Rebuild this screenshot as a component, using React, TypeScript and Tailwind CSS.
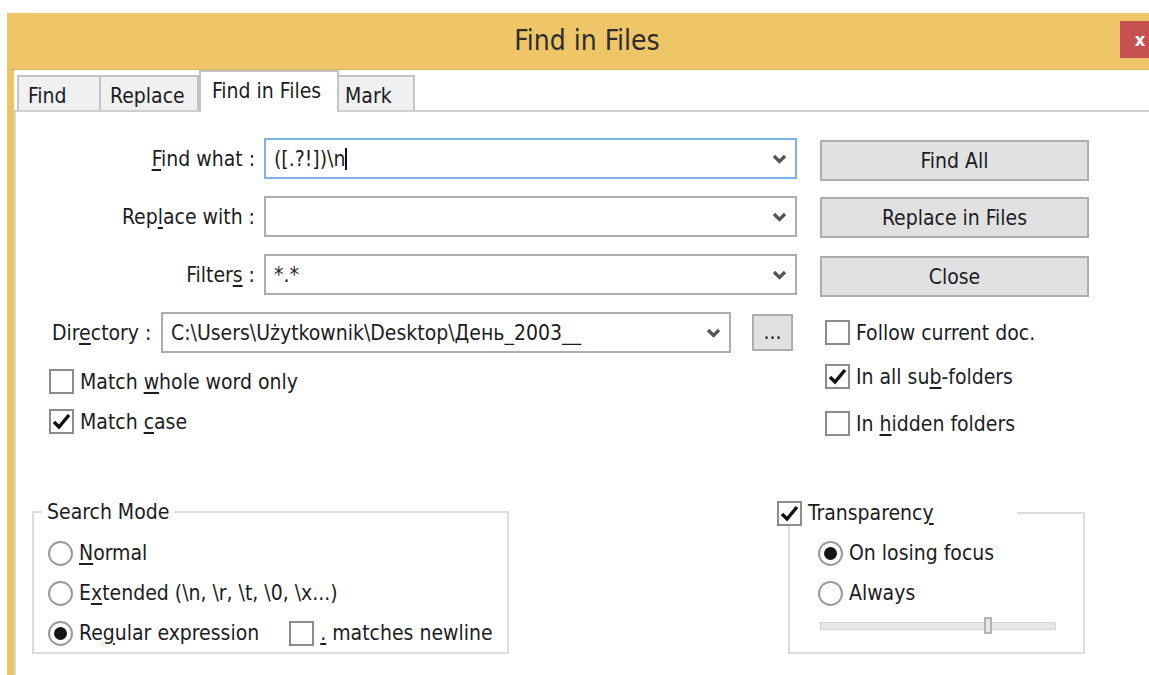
import React from "react";

const font = { fontFamily: '"DejaVu Sans Condensed", "Liberation Sans", sans-serif' };

// mnemonic letter, drawn underlined like a Win32 accelerator
const U = ({ children }: { children: React.ReactNode }) => (
    <span className="underline decoration-2 underline-offset-[3px]">{children}</span>
);

const Chevron = () => (
    <svg width="15" height="10" viewBox="0 0 15 10" className="shrink-0">
        <polyline points="2,2 7.5,7.5 13,2" fill="none" stroke="#555" strokeWidth="3.2" />
    </svg>
);

const Check = ({ checked }: { checked?: boolean }) => (
    <div className="w-[25px] h-[25px] shrink-0 border-2 border-[#8c8c8c] bg-white flex items-center justify-center">
        {checked && (
            <svg width="19" height="17" viewBox="0 0 19 17">
                <path d="M2 9 L7 14 L17 2" fill="none" stroke="#111" strokeWidth="3.4" />
            </svg>
        )}
    </div>
);

const Radio = ({ checked }: { checked?: boolean }) => (
    <div className="w-[25px] h-[25px] shrink-0 rounded-full border-2 border-[#9a9a9a] bg-white flex items-center justify-center">
        {checked && <div className="w-[13px] h-[13px] rounded-full bg-[#151515]" />}
    </div>
);

const Combo = ({ width, focused, children }: { width: string; focused?: boolean; children?: React.ReactNode }) => (
    <div
        className={`${width} h-[41px] shrink-0 border-2 bg-white flex items-center pl-[8px] pr-[8px] ${
            focused ? "border-[#7db2e8]" : "border-[#adadad]"
        }`}
    >
        <div className="flex-1 flex items-center whitespace-nowrap overflow-hidden">{children}</div>
        <Chevron />
    </div>
);

const Button = ({ label, className }: { label: string; className?: string }) => (
    <div
        className={`w-[269px] h-[41px] shrink-0 border-2 border-[#adadad] bg-[#e1e1e1] flex items-center justify-center ${className ?? ""}`}
    >
        {label}
    </div>
);

export default function App() {
    return (
        <div className="w-[1149px] h-[675px] overflow-hidden bg-white pt-[13px] pl-[7px] text-[21px] leading-[24px] text-[#1c1c24]" style={font}>
            <div className="w-[1160px] h-[700px] flex flex-col bg-[#ebc463]">
                {/* title bar */}
                <div className="relative h-[57px] shrink-0 flex items-center justify-center bg-[#efc667] border-b border-[#d8b35a]">
                    <span className="text-[28px] text-[#2e2e2e]">Find in Files</span>
                    <div className="absolute left-[1113px] top-[8px] w-[40px] h-[37px] bg-[#c75050] flex items-center justify-center text-white font-bold text-[18px]">
                        x
                    </div>
                </div>

                <div className="flex-1 ml-[7px] bg-white flex flex-col">
                    {/* tabs */}
                    <div className="h-[42px] shrink-0 flex items-end pl-[3px] border-b-2 border-[#cfcfcf]">
                        <div className="w-[84px] h-[35px] border-2 border-b-0 border-[#c4c4c4] bg-[#f0f0f0] pl-[9px] pt-[7px]">Find</div>
                        <div className="w-[98px] h-[35px] border-2 border-b-0 border-l-0 border-[#c4c4c4] bg-[#f0f0f0] pl-[9px] pt-[7px]">Replace</div>
                        <div className="relative z-10 -mb-[2px] w-[140px] h-[42px] border-2 border-b-0 border-[#c4c4c4] bg-white pl-[11px] pt-[7px]">
                            Find in Files
                        </div>
                        <div className="w-[76px] h-[35px] border-2 border-b-0 border-l-0 border-[#c4c4c4] bg-[#f0f0f0] pl-[6px] pt-[7px]">Mark</div>
                    </div>

                    {/* pane */}
                    <div className="flex-1 border-l-2 border-[#d6d6d6] pt-[26px]">
                        <div className="flex items-start h-[41px]">
                            <div className="w-[239px] h-[41px] flex items-center justify-end">
                                <span><U>F</U>ind what :</span>
                            </div>
                            <div className="ml-[9px]">
                                <Combo width="w-[533px]" focused>
                                    <span>([.?!])\n</span>
                                    <span className="inline-block w-[2px] h-[22px] bg-[#111]" />
                                </Combo>
                            </div>
                            <Button label="Find All" className="ml-[23px] mt-[2px]" />
                        </div>

                        <div className="flex items-start h-[41px] mt-[17px]">
                            <div className="w-[239px] h-[41px] flex items-center justify-end">
                                <span>Rep<U>l</U>ace with :</span>
                            </div>
                            <div className="ml-[9px]">
                                <Combo width="w-[533px]" />
                            </div>
                            <Button label="Replace in Files" className="ml-[23px] mt-[1px]" />
                        </div>

                        <div className="flex items-start h-[41px] mt-[17px]">
                            <div className="w-[239px] h-[41px] flex items-center justify-end">
                                <span>Filter<U>s</U> :</span>
                            </div>
                            <div className="ml-[9px]">
                                <Combo width="w-[533px]">
                                    <span>*.*</span>
                                </Combo>
                            </div>
                            <Button label="Close" className="ml-[23px] mt-[2px]" />
                        </div>

                        {/* directory + options */}
                        <div className="flex items-start mt-[17px]">
                            <div className="w-[777px] shrink-0">
                                <div className="flex items-start h-[41px] pl-[36px]">
                                    <div className="w-[109px] h-[41px] flex items-center">
                                        <span>Dir<U>e</U>ctory :</span>
                                    </div>
                                    <Combo width="w-[570px]">
                                        <span>C:\Users\Użytkownik\Desktop\День_2003__</span>
                                    </Combo>
                                    <div className="ml-[21px] mt-[2px] w-[41px] h-[37px] border-2 border-[#adadad] bg-[#e1e1e1] flex items-center justify-center pb-[2px]">
                                        ...
                                    </div>
                                </div>
                                <div className="flex items-center gap-[6px] pl-[33px] mt-[16px]">
                                    <Check />
                                    <span>Match <U>w</U>hole word only</span>
                                </div>
                                <div className="flex items-center gap-[6px] pl-[33px] mt-[15px]">
                                    <Check checked />
                                    <span>Match <U>c</U>ase</span>
                                </div>
                            </div>
                            <div className="ml-[32px] flex flex-col pt-[8px]">
                                <div className="flex items-center gap-[6px]">
                                    <Check />
                                    <span>Follow current doc.</span>
                                </div>
                                <div className="flex items-center gap-[6px] mt-[19px]">
                                    <Check checked />
                                    <span>In all su<U>b</U>-folders</span>
                                </div>
                                <div className="flex items-center gap-[6px] mt-[22px]">
                                    <Check />
                                    <span>In <U>h</U>idden folders</span>
                                </div>
                            </div>
                        </div>

                        {/* group boxes */}
                        <div className="flex items-start mt-[64px]">
                            <fieldset className="ml-[16px] w-[477px] h-[154px] border-2 border-[#dcdcdc] pl-[14px]">
                                <legend className="-ml-[6px] px-[5px] leading-[24px]">Search Mode</legend>
                                <div className="flex flex-col gap-[16px] mt-[17px]">
                                    <div className="flex items-center gap-[6px] h-[24px]">
                                        <Radio />
                                        <span><U>N</U>ormal</span>
                                    </div>
                                    <div className="flex items-center gap-[6px] h-[24px]">
                                        <Radio />
                                        <span>E<U>x</U>tended (\n, \r, \t, \0, \x...)</span>
                                    </div>
                                    <div className="flex items-center h-[24px]">
                                        <Radio checked />
                                        <span className="ml-[6px]">Re<U>g</U>ular expression</span>
                                        <div className="ml-[30px]">
                                            <Check />
                                        </div>
                                        <span className="ml-[6px]"><U>.</U> matches newline</span>
                                    </div>
                                </div>
                            </fieldset>

                            <fieldset className="ml-[279px] w-[297px] h-[154px] border-2 border-[#dcdcdc]">
                                <legend className="-ml-[13px] w-[240px] h-[26px] flex items-center bg-white">
                                    <Check checked />
                                    <span className="ml-[6px]">Transparenc<U>y</U></span>
                                </legend>
                                <div className="pl-[28px] flex flex-col gap-[16px] mt-[15px]">
                                    <div className="flex items-center gap-[6px] h-[24px]">
                                        <Radio checked />
                                        <span>On losing focus</span>
                                    </div>
                                    <div className="flex items-center gap-[6px] h-[24px]">
                                        <Radio />
                                        <span>Always</span>
                                    </div>
                                </div>
                                <div className="relative ml-[30px] mt-[12px] w-[236px] h-[17px] flex items-center">
                                    <div className="w-full h-[8px] bg-[#e6e6e6] border border-[#d4d4d4]" />
                                    <div className="absolute left-[164px] top-0 w-[8px] h-[17px] bg-[#e8e8e8] border-2 border-[#b4b4b4]" />
                                </div>
                            </fieldset>
                        </div>
                    </div>
                </div>
            </div>
        </div>
    );
}
